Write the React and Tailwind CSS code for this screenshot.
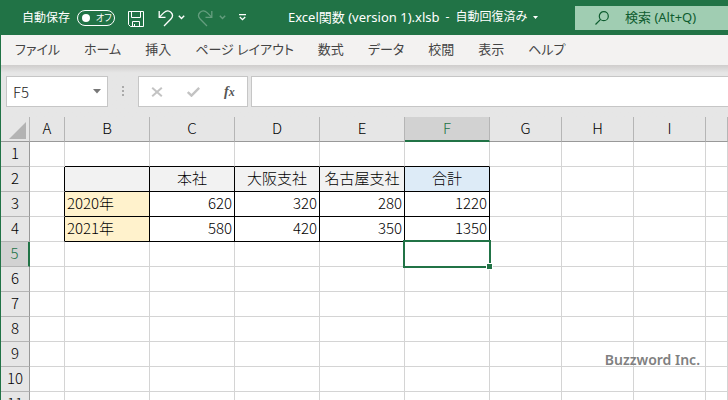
const columns = [
  { name: 'A', width: 'w-[35px]' },
  { name: 'B', width: 'w-[85px]' },
  { name: 'C', width: 'w-[85px]' },
  { name: 'D', width: 'w-[85px]' },
  { name: 'E', width: 'w-[85px]' },
  { name: 'F', width: 'w-[85px]' },
  { name: 'G', width: 'w-[72px]' },
  { name: 'H', width: 'w-[72px]' },
  { name: 'I', width: 'w-[72px]' },
  { name: '', width: 'w-auto' },
];

const rows = [1, 2, 3, 4, 5, 6, 7, 8, 9, 10, 11];

const cells = {
  B2: '', C2: '本社', D2: '大阪支社', E2: '名古屋支社', F2: '合計',
  B3: '2020年', C3: 620, D3: 320, E3: 280, F3: 1220,
  B4: '2021年', C4: 580, D4: 420, E4: 350, F4: 1350,
};

const menus = [
  'ファイル', 'ホーム', '挿入', 'ページ レイアウト', '数式', 'データ', '校閲', '表示', 'ヘルプ',
];

const selected = { col: 'F', row: 5 };

function fillClass(col, row) {
  if (row === 2) return col === 'F' ? 'bg-[#ddebf7] text-center' : 'bg-[#f2f2f2] text-center';
  if (col === 'B') return 'bg-[#fff2cc] text-left';
  return 'text-right';
}

function IconSave() {
  return (
    <svg width="16" height="16" viewBox="0 0 16 16" fill="none" stroke="currentColor">
      <path d="M.5.5h15v15H2.5l-2-2z" />
      <path d="M3.5.5v6h9v-6M4.5 15.5v-5h7v5M6.5 15.5v-2.5" />
    </svg>
  );
}

function IconUndo() {
  return (
    <svg width="16" height="17" viewBox="0 0 16 17" fill="none" stroke="currentColor" strokeWidth="1.3">
      <path d="M1.2 1v6.3h6.3" />
      <path d="M1.4 7.1 5.6 2.9C8 .6 11 .5 12.9 2.3c2 2 1.9 4.7 0 6.7L6 16" />
    </svg>
  );
}

function IconChevron() {
  return (
    <svg width="7" height="5" viewBox="0 0 7 5" fill="none" stroke="currentColor" strokeWidth="1.4">
      <path d="M.8.8 3.5 3.5 6.2.8" />
    </svg>
  );
}

function TitleBar() {
  return (
    <header className="flex h-[35px] items-center bg-[#217346] pl-[22px] text-xs text-white">
      <label htmlFor="autosave" className="w-[55px] shrink-0">自動保存</label>
      <span className="relative flex h-4 w-[38px] shrink-0 items-center rounded-full border border-white">
        <input
          id="autosave"
          type="checkbox"
          className="absolute inset-0 m-0 cursor-pointer appearance-none rounded-full"
        />
        <span className="ml-1 size-2 rounded-full bg-white" />
        <span className="ml-1.5 text-[9px] leading-none [font-feature-settings:'palt']">オフ</span>
      </span>
      <button aria-label="上書き保存" className="ml-[13px] pt-0.5"><IconSave /></button>
      <button aria-label="元に戻す" className="ml-3.5 pt-0.5"><IconUndo /></button>
      <button aria-label="元に戻す履歴" className="ml-1"><IconChevron /></button>
      <button aria-label="やり直し" className="ml-3 -scale-x-100 pt-0.5 opacity-30"><IconUndo /></button>
      <button aria-label="やり直し履歴" className="ml-1.5 opacity-30"><IconChevron /></button>
      <button aria-label="クイック アクセス ツール バーのユーザー設定" className="ml-[13px]">
        <svg width="7" height="7" viewBox="0 0 7 7" fill="none" stroke="currentColor" strokeWidth="1.3">
          <path d="M0 .7h7M.8 3 3.5 5.7 6.2 3" />
        </svg>
      </button>
      <button className="ml-[42px] flex shrink-0 items-center gap-1.5 whitespace-nowrap">
        <span className="text-[13px]">Excel関数 (version 1).xlsb</span>
        <span>-</span>
        <span>自動回復済み</span>
        <svg width="5" height="3" viewBox="0 0 5 3" fill="currentColor">
          <path d="M0 0h5L2.5 3z" />
        </svg>
      </button>
      <label className="ml-auto flex h-6 w-[153px] shrink-0 items-center bg-[#a0cdb2] pl-5 text-[#0e5c2f]">
        <svg className="shrink-0" width="14" height="14" viewBox="0 0 14 14" fill="none" stroke="currentColor" strokeWidth="1.2">
          <circle cx="8.8" cy="5.2" r="4.5" />
          <path d="M5.6 8.4.5 13.5" />
        </svg>
        <input
          type="text"
          aria-label="検索"
          placeholder="検索 (Alt+Q)"
          className="ml-4 w-full min-w-0 bg-transparent text-[13px] outline-none placeholder:text-[#0e5c2f]"
        />
      </label>
    </header>
  );
}

function MenuBar() {
  return (
    <nav className="flex h-[30px] items-center gap-6 bg-[#f3f2f1] pl-3.5 text-[13px] text-[#444] [font-feature-settings:'palt']">
      {menus.map(name => (
        <button key={name} className="shrink-0 whitespace-nowrap">{name}</button>
      ))}
    </nav>
  );
}

function FormulaBar() {
  return (
    <div className="flex h-[52px] items-start bg-linear-to-b from-[#cfcdcc] to-[#e6e6e6] to-15% pt-[11px] pl-[5px]">
      <div className="flex h-[31px] w-[102px] items-center border border-[#c6c6c6] bg-white">
        <input
          type="text"
          aria-label="名前ボックス"
          defaultValue="F5"
          className="w-[86px] pt-0.5 pl-1.5 font-['Noto_Sans_CJK_JP',sans-serif] text-[15px] font-light text-[#222] outline-none"
        />
        <button aria-label="名前の一覧">
          <svg width="8" height="5" viewBox="0 0 8 5" fill="#777"><path d="M0 0h8L4 4.5z" /></svg>
        </button>
      </div>
      <svg className="mt-2.5 ml-3.5" width="2" height="11" fill="#aaa">
        <path d="M0 0h2v2H0zM0 4h2v2H0zM0 8h2v2H0z" />
      </svg>
      <div className="ml-3.5 flex h-[31px] w-[110px] items-center border border-[#c6c6c6] bg-white pl-3">
        <button aria-label="キャンセル">
          <svg width="12" height="10" viewBox="0 0 12 10" fill="none" stroke="#c3c3c3" strokeWidth="2">
            <path d="m1.2.8 9.6 8.4M10.8.8 1.2 9.2" />
          </svg>
        </button>
        <button aria-label="入力" className="ml-6">
          <svg width="13" height="10" viewBox="0 0 13 10" fill="none" stroke="#c3c3c3" strokeWidth="2.4">
            <path d="m.8 5 3.7 3.6L12.2.9" />
          </svg>
        </button>
        <button
          aria-label="関数の挿入"
          className="ml-6 flex items-baseline font-['Liberation_Serif',serif] text-sm leading-none font-bold text-[#555] italic"
        >
          f<span className="text-xs leading-none">x</span>
        </button>
      </div>
      <input
        type="text"
        aria-label="数式バー"
        className="ml-[3px] h-[31px] min-w-0 flex-1 border border-r-0 border-[#c6c6c6] bg-white px-2 text-sm outline-none"
      />
    </div>
  );
}

function Cell({ col, nextCol, row }) {
  const key = `${col}${row}`;
  const inTable = key in cells;
  const isSelected = col === selected.col && row === selected.row;
  const right = inTable || `${nextCol}${row}` in cells ? 'border-r-black' : 'border-r-[#d4d4d4]';
  const bottom = inTable || `${col}${row + 1}` in cells ? 'border-b-black' : 'border-b-[#d4d4d4]';
  return (
    <td className={`relative border-r border-b p-0 align-top whitespace-nowrap ${right} ${bottom} ${inTable ? fillClass(col, row) : ''}`}>
      {inTable && <div className="px-0.5 text-[15px] leading-[22px]">{cells[key]}</div>}
      {isSelected && (
        <div className="absolute -inset-0.5 z-10 border-2 border-[#217346]">
          <span className="absolute -right-1 -bottom-1 size-[7px] border border-white bg-[#217346]" />
        </div>
      )}
    </td>
  );
}

function Sheet() {
  return (
    <table className="w-full table-fixed border-separate border-spacing-0 bg-white text-[15px] font-light text-black">
      <colgroup>
        <col className="w-[29px]" />
        {columns.map((c, i) => <col key={i} className={c.width} />)}
      </colgroup>
      <thead>
        <tr className="h-[25px]">
          <th className="border-r border-b border-r-[#b5b5b5] border-b-[#999] bg-[#e6e6e6] p-0">
            <svg className="mt-0.5 ml-2" width="17" height="17" fill="#b3b3b3"><path d="M17 0v17H0z" /></svg>
          </th>
          {columns.map((c, i) => (
            <th
              key={i}
              className={`border-r p-0 align-top font-light ${
                c.name === selected.col
                  ? 'border-b-2 border-r-[#b5b5b5] border-b-[#217346] bg-[#d2d2d2] text-[#217346]'
                  : 'border-b border-r-[#b5b5b5] border-b-[#999] bg-[#e6e6e6]'
              }`}
            >
              <div className="leading-[22px]">{c.name}</div>
            </th>
          ))}
        </tr>
      </thead>
      <tbody>
        {rows.map(row => (
          <tr key={row} className="h-[25px]">
            <th
              className={`p-0 align-top font-light ${
                row === selected.row
                  ? 'border-r-2 border-b border-r-[#217346] border-b-[#b5b5b5] bg-[#d2d2d2] text-[#217346]'
                  : 'border-r border-b border-r-[#999] border-b-[#b5b5b5] bg-[#e6e6e6]'
              }`}
            >
              <div className="leading-[22px]">{row}</div>
            </th>
            {columns.map((c, i) => (
              <Cell key={i} col={c.name} nextCol={columns[i + 1]?.name} row={row} />
            ))}
          </tr>
        ))}
      </tbody>
    </table>
  );
}

export default function App() {
  return (
    <div className="relative h-screen overflow-hidden bg-white font-['Noto_Sans','Noto_Sans_CJK_JP',sans-serif]">
      <TitleBar />
      <div className="border-l border-[#217346]">
        <MenuBar />
        <FormulaBar />
        <main className="font-['Noto_Sans_CJK_JP',sans-serif]">
          <Sheet />
        </main>
      </div>
      <div className="absolute right-7 bottom-[30px] z-20 text-sm font-semibold text-[#808080]">Buzzword Inc.</div>
    </div>
  );
}
